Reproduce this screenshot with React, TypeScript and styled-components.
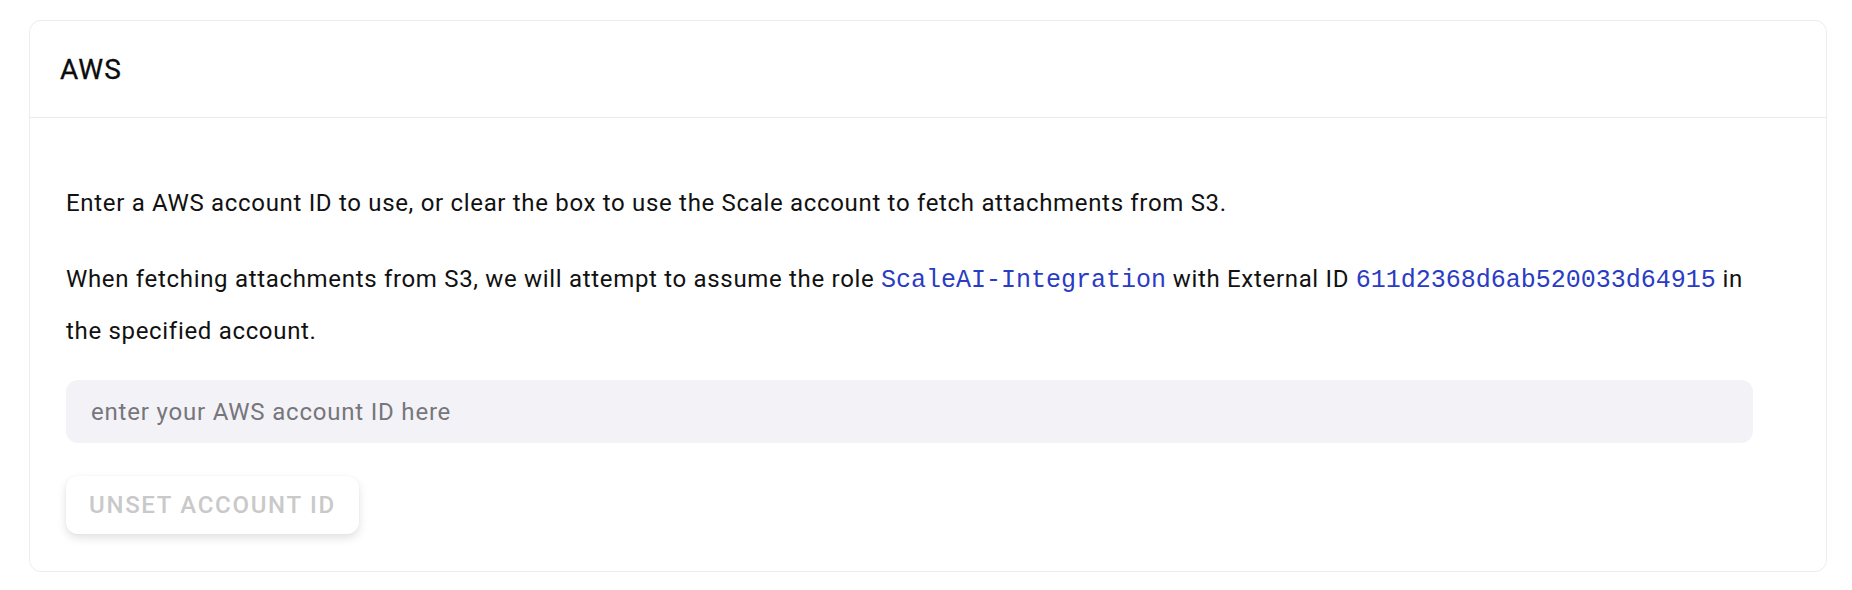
import React from "react";
import styled, { createGlobalStyle } from "styled-components";

const GlobalStyle = createGlobalStyle`
  html, body {
    margin: 0;
    padding: 0;
    background: #ffffff;
  }
  body {
    font-family: Roboto, "Noto Sans", "Liberation Sans", sans-serif;
    color: #111111;
  }
  * { box-sizing: border-box; }
`;

const Page = styled.div`
  padding: 20px 25px 0 29px;
`;

const Card = styled.section`
  border: 1px solid #ececec;
  border-radius: 12px;
  background: #ffffff;
`;

const CardHeader = styled.header`
  height: 97px;
  display: flex;
  align-items: center;
  padding: 0 30px;
  border-bottom: 1px solid #ececec;
`;

const Title = styled.h2`
  margin: 0;
  font-size: 28px;
  font-weight: 400;
  letter-spacing: 1px;
  color: #0c0c0c;
  -webkit-text-stroke: 0.3px #0c0c0c;
`;

const CardBody = styled.div`
  padding: 60px 73px 37px 36px;
`;

const Paragraph = styled.p<{ $last?: boolean }>`
  margin: 0 0 ${(p) => (p.$last ? "23px" : "25px")};
  font-size: 24px;
  line-height: 51px;
  letter-spacing: 0.68px;
  color: #111111;
`;

const Code = styled.code`
  font-family: "Liberation Mono", "DejaVu Sans Mono", monospace;
  font-size: 25px;
  letter-spacing: 0;
  color: #2a3cc3;
`;

const Input = styled.input`
  display: block;
  width: 100%;
  height: 63px;
  border: none;
  outline: none;
  border-radius: 12px;
  background: #f3f3f7;
  padding: 0 25px;
  font-family: inherit;
  font-size: 24px;
  letter-spacing: 0.8px;
  color: #111111;
  &::placeholder {
    color: #76767c;
  }
`;

const Button = styled.button<{ disabled?: boolean }>`
  display: inline-flex;
  align-items: center;
  margin-top: 33px;
  height: 58px;
  padding: 0 23px;
  border: none;
  border-radius: 12px;
  background: #ffffff;
  box-shadow: 0 4px 10px rgba(0, 0, 0, 0.12), 0 0 2px rgba(0, 0, 0, 0.04);
  font-family: inherit;
  font-size: 24px;
  font-weight: 500;
  letter-spacing: 1.7px;
  text-transform: uppercase;
  color: ${(p) => (p.disabled ? "#c9c9c9" : "#333333")};
  cursor: ${(p) => (p.disabled ? "default" : "pointer")};
`;

export default function App() {
  return (
    <>
      <GlobalStyle />
      <Page>
        <Card>
          <CardHeader>
            <Title>AWS</Title>
          </CardHeader>
          <CardBody>
            <Paragraph>
              Enter a AWS account ID to use, or clear the box to use the Scale account to fetch attachments from S3.
            </Paragraph>
            <Paragraph $last>
              When fetching attachments from S3, we will attempt to assume the role <Code>ScaleAI-Integration</Code> with
              External ID <Code>611d2368d6ab520033d64915</Code> in the specified account.
            </Paragraph>
            <Input placeholder="enter your AWS account ID here" />
            <Button disabled>Unset Account ID</Button>
          </CardBody>
        </Card>
      </Page>
    </>
  );
}
